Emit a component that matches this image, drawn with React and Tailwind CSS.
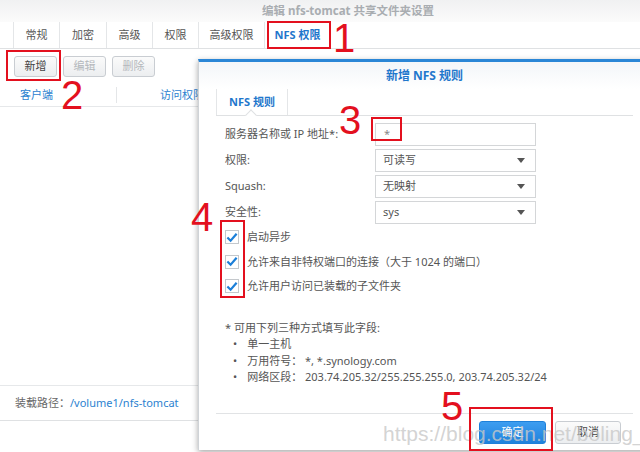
import React from "react";

const font = { fontFamily: '"Noto Sans", "Noto Sans CJK SC", sans-serif' };

const tabs = [
  ["常规", "w-[46px]"],
  ["加密", "w-[47px]"],
  ["高级", "w-[46px]"],
  ["权限", "w-[46px]"],
  ["高级权限", "w-[66px]"],
];

const ToolButton = ({ children, disabled }) => (
  <button
    className={`h-[21px] w-[43px] rounded-[3px] border border-[#c9cdd2] bg-gradient-to-b from-[#fbfbfb] to-[#eceef0] text-[11px] ${
      disabled ? "text-[#b4b8bc]" : "text-[#444]"
    }`}
  >
    {children}
  </button>
);

const Select = ({ value }) => (
  <div className="flex h-[23px] w-[161px] items-center justify-between border border-[#d4d6d8] bg-white pl-[7px] pr-[10px] text-[11px] text-[#555]">
    <span>{value}</span>
    <span className="h-0 w-0 border-x-[4px] border-t-[5px] border-x-transparent border-t-[#555]" />
  </div>
);

const Check = ({ label }) => (
  <div className="flex h-[24.5px] items-center gap-[8px] text-[11px] text-[#555]">
    <div className="flex h-[14px] w-[14px] items-center justify-center border border-[#c4c8cc] bg-white">
      <svg width="13" height="11" viewBox="0 0 13 11">
        <path d="M1.5 5.5 L5 9 L11.5 1.5" fill="none" stroke="#1c7fd8" strokeWidth="2.4" />
      </svg>
    </div>
    <span>{label}</span>
  </div>
);

const Mark = ({ className, children }) => (
  <div
    className={`absolute text-[40px] font-light leading-none text-[#e3101e] ${className}`}
    style={{ fontFamily: '"Liberation Sans", sans-serif' }}
  >
    {children}
  </div>
);

const Box = ({ className }) => (
  <div className={`absolute border-2 border-[#e3101e] ${className}`} />
);

export default function App() {
  return (
    <div className="relative h-[452px] w-[640px] overflow-hidden bg-white" style={font}>
      {/* window title */}
      <div className="h-[22px] bg-gradient-to-b from-[#f0f1f2] to-[#fbfbfb] pl-[262px] pt-[2px] text-[11.5px] font-bold text-[#a9adb1]">
        编辑 nfs-tomcat 共享文件夹设置
      </div>

      {/* settings tabs */}
      <div className="flex h-[27px] items-stretch border-b border-[#dfe1e3] bg-white pl-[13px]">
        {tabs.map(([t, w]) => (
          <div
            key={t}
            className={`flex items-center justify-center border-l border-[#e4e6e8] text-[11px] text-[#555] ${w}`}
          >
            {t}
          </div>
        ))}
        <div className="flex w-[66px] items-center justify-center border-l border-[#e4e6e8] text-[11px] font-bold text-[#1f77cc]">
          NFS 权限
        </div>
      </div>

      {/* toolbar */}
      <div className="flex gap-[6px] pl-[14px] pt-[7px]">
        <ToolButton>新增</ToolButton>
        <ToolButton disabled>编辑</ToolButton>
        <ToolButton disabled>删除</ToolButton>
      </div>

      {/* list header */}
      <div className="mt-[7px] flex h-[23px] items-center whitespace-nowrap border-b border-[#e6e8ea] text-[11px] text-[#2c82d0]">
        <div className="w-[117px] border-r border-[#e4e6e8] pl-[20px]">客户端</div>
        <div className="pl-[43px]">访问权限</div>
      </div>

      <div className="h-[279px] border-b border-[#e6e8ea]" />

      <div className="flex h-[35px] items-center border-b border-[#dfe1e3] pl-[15px] text-[11px] text-[#666]">
        装载路径：<span className="text-[#2c82d0]">/volume1/nfs-tomcat</span>
      </div>

      {/* add rule dialog */}
      <div className="absolute left-[198px] top-[59px] h-[391px] w-[452px] border-t-[3px] border-l border-[#2a86d6] border-l-[#cfd3d7] bg-white shadow-[0_2px_6px_rgba(0,0,0,0.35)]">
        <div className="flex h-[27px] items-center justify-center bg-gradient-to-b from-[#f3f6f9] to-white text-[12px] font-bold text-[#1f77cc]">
          新增 NFS 规则
        </div>

        <div className="relative mx-[17px] flex h-[27px] border-b border-[#dfe1e3]">
          <div className="flex w-[72px] items-center justify-center border-x border-[#e4e6e8] text-[11px] font-bold text-[#1f77cc]">
            NFS 规则
          </div>
          <div className="absolute left-[31px] top-[22px] h-[8px] w-[8px] rotate-45 border-l border-t border-[#dfe1e3] bg-white" />
        </div>

        <div className="pl-[26px] pt-[5px] text-[11px] text-[#555]">
          <div className="flex h-[26px] items-center">
            <span className="w-[150px]">服务器名称或 IP 地址*:</span>
            <div className="flex h-[23px] w-[161px] items-center border border-[#d4d6d8] pl-[8px] text-[#888]">*</div>
          </div>
          <div className="flex h-[26px] items-center">
            <span className="w-[150px]">权限:</span>
            <Select value="可读写" />
          </div>
          <div className="flex h-[26px] items-center">
            <span className="w-[150px]">Squash:</span>
            <Select value="无映射" />
          </div>
          <div className="flex h-[26px] items-center">
            <span className="w-[150px]">安全性:</span>
            <Select value="sys" />
          </div>

          <div>
            <Check label="启动异步" />
            <Check label="允许来自非特权端口的连接（大于 1024 的端口）" />
            <Check label="允许用户访问已装载的子文件夹" />
          </div>

          <div className="mt-[21px] leading-[16.5px]">
            <div>* 可用下列三种方式填写此字段:</div>
            <ul className="ml-[8px]">
              <li className="flex gap-[10px]"><span>•</span>单一主机</li>
              <li className="flex gap-[10px]"><span>•</span><span>万用符号：&nbsp;*, *.synology.com</span></li>
              <li className="flex gap-[10px]"><span>•</span><span>网络区段：&nbsp;203.74.205.32/255.255.255.0, 203.74.205.32/24</span></li>
            </ul>
          </div>
        </div>

        <div className="mx-[17px] mt-[27px] border-t border-[#e1e3e5]" />

        <div className="flex justify-end gap-[9px] pr-[29px] pt-[7px] text-[11px]">
          <button className="h-[23px] w-[67px] rounded-[3px] border border-[#1e80d9] bg-gradient-to-b from-[#3d9df0] to-[#1f82dc] text-white">
            确定
          </button>
          <button className="h-[23px] w-[66px] rounded-[3px] border border-[#c9cdd2] bg-gradient-to-b from-[#fbfbfb] to-[#eceef0] text-[#444]">
            取消
          </button>
        </div>
      </div>

      {/* watermark */}
      <div
        className="pointer-events-none absolute left-[383px] top-[418px] text-[21px] text-[#c8c8c8]/80"
        style={{ fontFamily: '"Liberation Sans", sans-serif' }}
      >
        https://blog.csdn.net/boling_cavalry
      </div>

      {/* annotation marks */}
      <Box className="left-[267px] top-[21px] h-[28px] w-[64px]" />
      <Mark className="left-[333px] top-[18px]">1</Mark>
      <Box className="left-[6px] top-[50px] h-[31px] w-[55px]" />
      <Mark className="left-[61px] top-[75px]">2</Mark>
      <Box className="left-[371px] top-[117px] h-[24px] w-[31px]" />
      <Mark className="left-[339px] top-[100px]">3</Mark>
      <Box className="left-[220px] top-[220px] h-[78px] w-[25px]" />
      <Mark className="left-[191px] top-[197px]">4</Mark>
      <Box className="left-[469px] top-[407px] h-[44px] w-[84px]" />
      <Mark className="left-[441px] top-[386px]">5</Mark>
    </div>
  );
}
